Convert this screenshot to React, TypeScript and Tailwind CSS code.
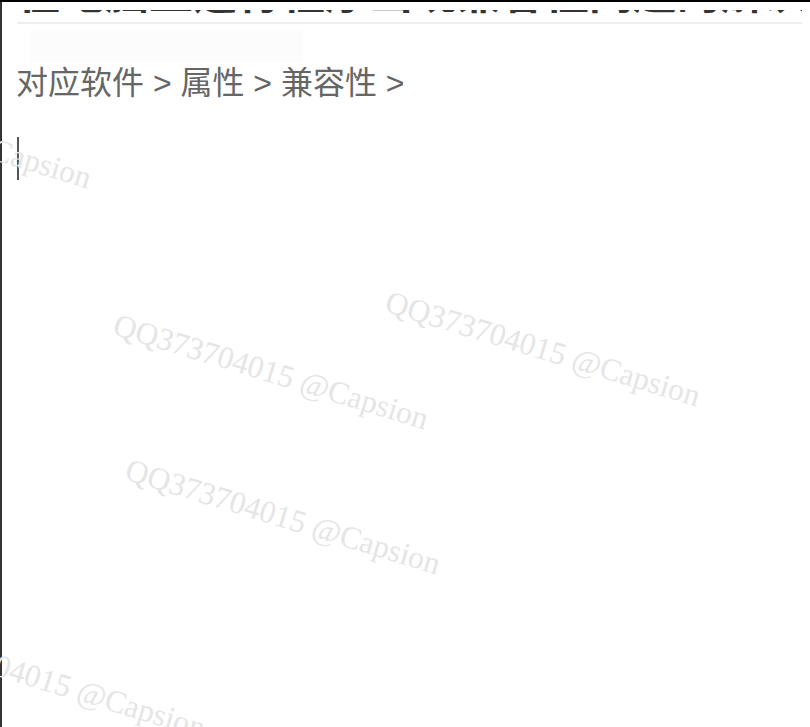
import React from 'react';

const marks = [
  { left: 119, top: 307 },
  { left: 391, top: 284 },
  { left: 131, top: 452 },
  { left: -104, top: 616 },
  { left: -218, top: 66 },
];

const App = () => {
  return (
    <div className="relative w-[810px] h-[727px] overflow-hidden bg-white border-t-2 border-black">
      <div className="h-full border-l-2 border-[#333] pl-[15px] pr-[8px]">
        {/* page title, scrolled mostly out of view */}
        <div className="pt-[8px] pb-[6px] border-b-2 border-[#eee]">
          <div className="h-[6px] overflow-hidden flex items-end">
            <h1
              className="whitespace-nowrap text-[44px] leading-none font-bold text-[#333]"
              style={{ fontFamily: '"Liberation Sans", "Noto Sans CJK SC", sans-serif' }}
            >
              在电脑上运行程序出现兼容性问题的解决方法
            </h1>
          </div>
        </div>

        <div className="ml-[13px] mt-[6px] w-[273px] h-[32px] bg-[#fcfcfc]" />

        <p
          className="mt-[-3px] -ml-[1px] text-[32px] leading-[48px] text-[#666]"
          style={{ fontFamily: '"Liberation Sans", "Noto Sans CJK SC", sans-serif' }}
        >
          对应软件 &gt; 属性 &gt; 兼容性 &gt;
        </p>

        {/* caret */}
        <div className="mt-[30px] w-[2px] h-[43px] bg-[#555]" />
      </div>

      {marks.map((m, i) => (
        <span
          key={i}
          className="absolute origin-top-left rotate-[17deg] whitespace-nowrap pointer-events-none text-[31.5px] leading-none text-[#e5e5e5]"
          style={{ left: m.left, top: m.top, fontFamily: '"Liberation Serif", serif' }}
        >
          QQ373704015 @Capsion
        </span>
      ))}
    </div>
  );
};

export default App;
